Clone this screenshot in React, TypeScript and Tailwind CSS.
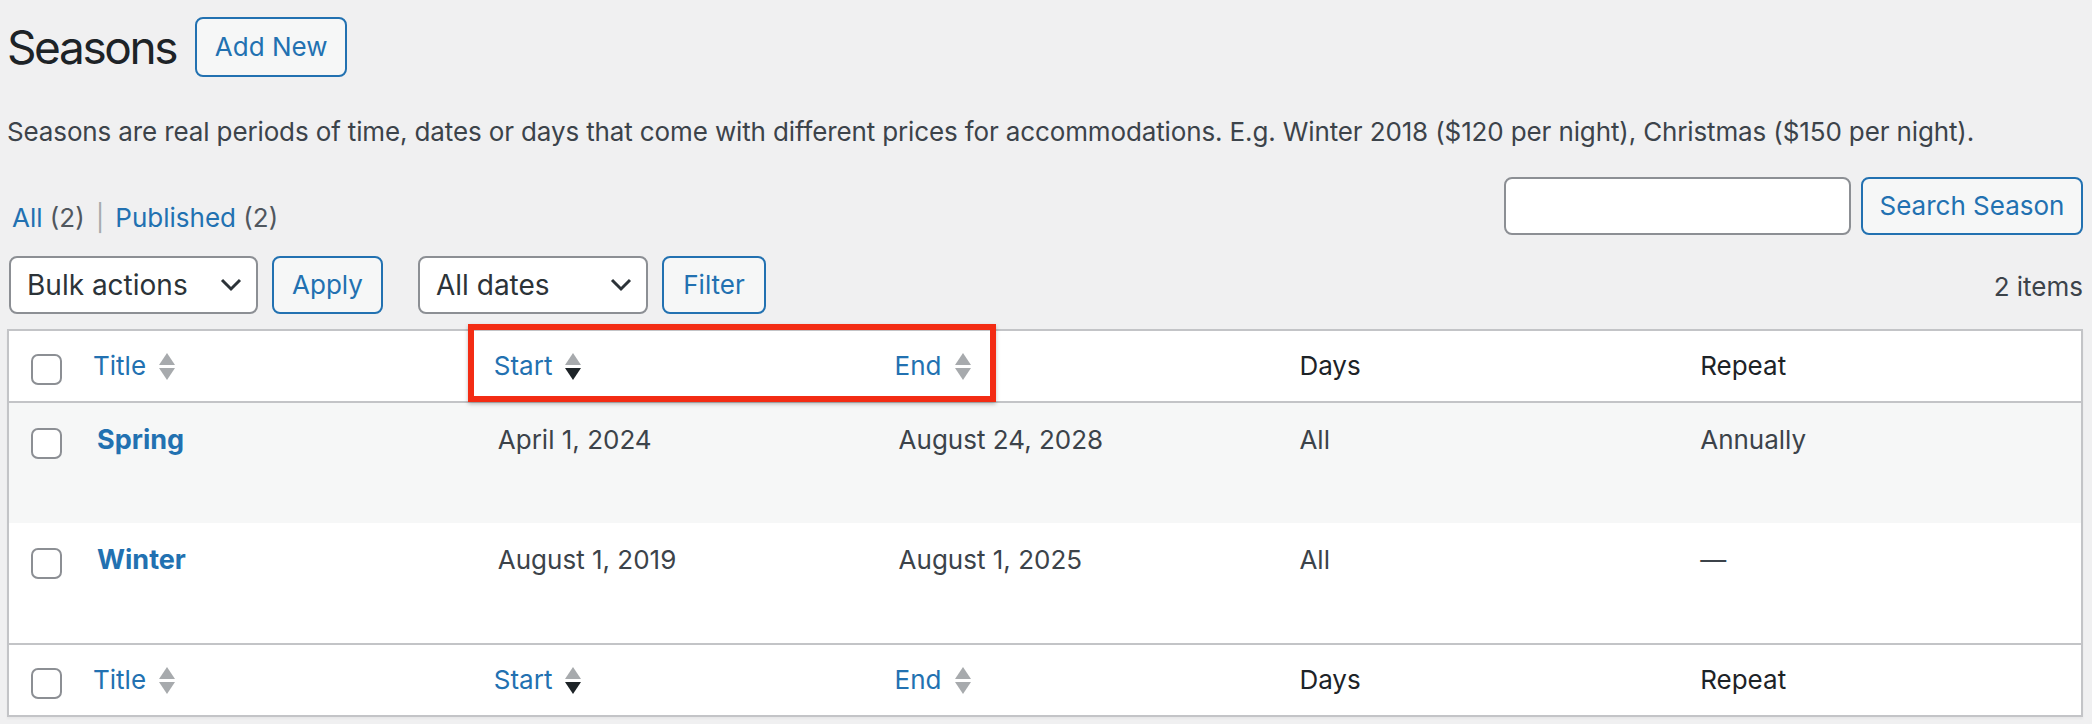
import React from "react";

const seasons = [
  { title: "Spring", start: "April 1, 2024", end: "August 24, 2028", days: "All", repeat: "Annually" },
  { title: "Winter", start: "August 1, 2019", end: "August 1, 2025", days: "All", repeat: "—" },
];

function SortIcon({ active }: { active?: boolean }) {
  return (
    <svg width="16" height="28" viewBox="0 0 16 28" className="ml-[13px] shrink-0">
      <polygon points="0,13 8,1 16,13" fill="#a7aaad" />
      <polygon points="0,16 16,16 8,28" fill={active ? "#1d2327" : "#a7aaad"} />
    </svg>
  );
}

function Chevron() {
  return (
    <svg width="22" height="14" viewBox="0 0 22 14" className="shrink-0">
      <path d="M2 2l9 9 9-9" fill="none" stroke="#2c3338" strokeWidth="3" />
    </svg>
  );
}

function Checkbox() {
  return <span className="block w-[31px] h-[31px] ml-[22px] rounded-[7px] border-2 border-[#8c8f94] bg-white" />;
}

function HeadRow({ border }: { border: "top" | "bottom" }) {
  return (
    <div
      className={
        "grid grid-cols-[68px_repeat(5,1fr)] h-[72px] items-center bg-white border-[#c3c4c7] " +
        (border === "bottom" ? "border-b-2" : "border-t-2")
      }
    >
      <div className="pt-[6px]">
        <Checkbox />
      </div>
      <a className="flex items-center pl-[16px] text-[#2271b1]">
        Title <SortIcon />
      </a>
      <a className="flex items-center pl-[16px] text-[#2271b1]">
        Start <SortIcon active />
      </a>
      <a className="flex items-center pl-[16px] text-[#2271b1]">
        End <SortIcon />
      </a>
      <div className="pl-[20px] text-[#1d2327]">Days</div>
      <div className="pl-[20px] text-[#1d2327]">Repeat</div>
    </div>
  );
}

export default function App() {
  return (
    <div className="min-h-screen bg-[#f0f0f1] font-['Inter',sans-serif] text-[26px] leading-[36px] text-[#3c434a]">
      <div className="pl-[7px] pr-[9px] pt-[17px]">
        <div className="flex items-center gap-[19px]">
          <h1 className="text-[46px] leading-[60px] text-[#1d2327] tracking-[-2.4px]">Seasons</h1>
          <button className="h-[60px] w-[152px] rounded-[8px] border-2 border-[#2271b1] bg-[#f6f7f7] text-[#2271b1]">
            Add New
          </button>
        </div>

        <p className="mt-[37px] tracking-[-0.13px]">
          Seasons are real periods of time, dates or days that come with different prices for accommodations. E.g.
          Winter 2018 ($120 per night), Christmas ($150 per night).
        </p>

        <div className="mt-[27px] flex items-start justify-between">
          <ul className="mt-[23px] pl-[5px] flex text-[#50575e]">
            <li>
              <a className="text-[#2271b1]">All</a> (2)
              <span className="mx-[11px] text-[#a7aaad]">|</span>
            </li>
            <li>
              <a className="text-[#2271b1]">Published</a> (2)
            </li>
          </ul>
          <div className="flex gap-[10px]">
            <input className="h-[58px] w-[347px] rounded-[8px] border-2 border-[#8c8f94] bg-white px-[16px] outline-none" />
            <button className="h-[58px] w-[222px] rounded-[8px] border-2 border-[#2271b1] bg-[#f6f7f7] text-[#2271b1]">
              Search Season
            </button>
          </div>
        </div>

        <div className="mt-[20px] flex h-[58px] items-center justify-between">
          <div className="flex items-center">
            <div className="ml-[2px] flex h-[58px] w-[249px] items-center justify-between rounded-[8px] border-2 border-[#8c8f94] bg-white pl-[16px] pr-[14px] text-[28px] text-[#2c3338]">
              Bulk actions
              <Chevron />
            </div>
            <button className="ml-[14px] h-[58px] w-[111px] rounded-[8px] border-2 border-[#2271b1] bg-[#f6f7f7] text-[#2271b1]">
              Apply
            </button>
            <div className="ml-[35px] flex h-[58px] w-[230px] items-center justify-between rounded-[8px] border-2 border-[#8c8f94] bg-white pl-[16px] pr-[14px] text-[28px] text-[#2c3338]">
              All dates
              <Chevron />
            </div>
            <button className="ml-[14px] h-[58px] w-[104px] rounded-[8px] border-2 border-[#2271b1] bg-[#f6f7f7] text-[#2271b1]">
              Filter
            </button>
          </div>
          <span className="mt-[3px]">2 items</span>
        </div>

        <div className="relative mt-[15px] border-2 border-[#c3c4c7] bg-white shadow-[0_2px_2px_rgba(0,0,0,0.04)]">
          <HeadRow border="bottom" />
          {seasons.map((s, i) => (
            <div
              key={s.title}
              className={
                "grid grid-cols-[68px_repeat(5,1fr)] h-[120px] items-start pt-[19px] " +
                (i % 2 === 0 ? "bg-[#f6f7f7]" : "bg-white")
              }
            >
              <div className="pt-[6px]">
                <Checkbox />
              </div>
              <a className="pl-[20px] text-[27px] font-bold text-[#2271b1]">{s.title}</a>
              <div className="pl-[20px]">{s.start}</div>
              <div className="pl-[20px]">{s.end}</div>
              <div className="pl-[20px]">{s.days}</div>
              <div className="pl-[20px]">{s.repeat}</div>
            </div>
          ))}
          <HeadRow border="top" />

          <div className="pointer-events-none absolute left-[459px] top-[-7px] h-[78px] w-[528px] border-[6px] border-[#f32c14] shadow-[0_2px_4px_rgba(0,0,0,0.25)]" />
        </div>
      </div>
    </div>
  );
}
